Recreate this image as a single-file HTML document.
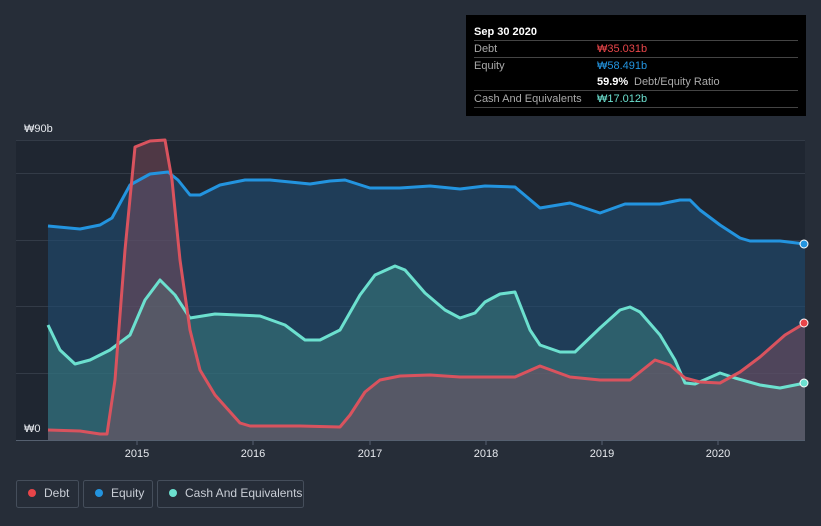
<!DOCTYPE html>
<html><head><style>
body{margin:0;background:#262d38;font-family:"Liberation Sans",sans-serif;}
svg{display:block}
</style></head><body>
<svg width="821" height="526" xmlns="http://www.w3.org/2000/svg" font-family="Liberation Sans, sans-serif">
<rect width="821" height="526" fill="#262d38"/>
<rect x="16" y="140" width="789" height="300" fill="#1f2631"/>
<g stroke="#333b47" stroke-width="1">
<line x1="16" y1="140.5" x2="805" y2="140.5"/><line x1="16" y1="173.5" x2="805" y2="173.5"/>
<line x1="16" y1="240.5" x2="805" y2="240.5"/><line x1="16" y1="306.5" x2="805" y2="306.5"/>
<line x1="16" y1="373.5" x2="805" y2="373.5"/>
</g>
<path d="M48,226 L80,229 L100,225 L112,218 L130,185 L150,174 L168,172 L178,180 L190,195 L200,195 L220,185 L245,180 L270,180 L290,182 L310,184 L330,181 L345,180 L370,188 L400,188 L430,186 L460,189 L485,186 L515,187 L540,208 L570,203 L600,213 L625,204 L660,204 L680,200 L690,200 L700,210 L720,225 L740,238 L750,241 L780,241 L805,244 L805,440 L48,440Z" fill="#1f4d73" fill-opacity="0.6"/>
<path d="M48,325 L60,350 L75,364 L90,360 L110,350 L130,335 L145,300 L160,280 L175,295 L190,318 L215,314 L260,316 L285,325 L305,340 L320,340 L340,330 L360,295 L375,275 L395,266 L405,270 L425,293 L445,310 L460,318 L475,313 L485,302 L500,294 L515,292 L530,330 L540,345 L560,352 L575,352 L600,328 L620,310 L630,307 L640,312 L660,335 L675,360 L685,383 L695,384 L720,373 L735,378 L760,385 L780,388 L805,383 L805,440 L48,440Z" fill="#3f8a86" fill-opacity="0.45"/>
<path d="M48,430 L80,431 L100,434 L107,434 L115,380 L125,250 L135,147 L150,141 L165,140 L172,180 L180,260 L190,330 L200,370 L215,395 L240,423 L250,426 L300,426 L340,427 L350,415 L365,392 L380,380 L400,376 L430,375 L460,377 L515,377 L540,366 L570,377 L600,380 L630,380 L655,360 L670,365 L685,378 L700,382 L720,383 L740,372 L760,357 L785,335 L805,323 L805,440 L48,440Z" fill="#8a5060" fill-opacity="0.45"/>
<g fill="none" stroke-width="3" stroke-linejoin="round">
<path d="M48,226 L80,229 L100,225 L112,218 L130,185 L150,174 L168,172 L178,180 L190,195 L200,195 L220,185 L245,180 L270,180 L290,182 L310,184 L330,181 L345,180 L370,188 L400,188 L430,186 L460,189 L485,186 L515,187 L540,208 L570,203 L600,213 L625,204 L660,204 L680,200 L690,200 L700,210 L720,225 L740,238 L750,241 L780,241 L805,244" stroke="#2394df"/>
<path d="M48,325 L60,350 L75,364 L90,360 L110,350 L130,335 L145,300 L160,280 L175,295 L190,318 L215,314 L260,316 L285,325 L305,340 L320,340 L340,330 L360,295 L375,275 L395,266 L405,270 L425,293 L445,310 L460,318 L475,313 L485,302 L500,294 L515,292 L530,330 L540,345 L560,352 L575,352 L600,328 L620,310 L630,307 L640,312 L660,335 L675,360 L685,383 L695,384 L720,373 L735,378 L760,385 L780,388 L805,383" stroke="#6ce0cf"/>
<path d="M48,430 L80,431 L100,434 L107,434 L115,380 L125,250 L135,147 L150,141 L165,140 L172,180 L180,260 L190,330 L200,370 L215,395 L240,423 L250,426 L300,426 L340,427 L350,415 L365,392 L380,380 L400,376 L430,375 L460,377 L515,377 L540,366 L570,377 L600,380 L630,380 L655,360 L670,365 L685,378 L700,382 L720,383 L740,372 L760,357 L785,335 L805,323" stroke="#d9535e"/>
</g>
<circle cx="804" cy="244" r="4" fill="#2394df" stroke="#fff" stroke-width="1"/>
<circle cx="804" cy="323" r="4" fill="#e84549" stroke="#fff" stroke-width="1"/>
<circle cx="804" cy="383" r="4" fill="#6ce0cf" stroke="#fff" stroke-width="1"/>
<line x1="16" y1="440.5" x2="805" y2="440.5" stroke="#556070"/>
<g stroke="#556070"><line x1="137" y1="440" x2="137" y2="445"/><line x1="253" y1="440" x2="253" y2="445"/><line x1="370" y1="440" x2="370" y2="445"/><line x1="486" y1="440" x2="486" y2="445"/><line x1="602" y1="440" x2="602" y2="445"/><line x1="718" y1="440" x2="718" y2="445"/></g>
<g fill="#e6e9ee" font-size="11" text-anchor="middle"><text x="137" y="457">2015</text><text x="253" y="457">2016</text><text x="370" y="457">2017</text><text x="486" y="457">2018</text><text x="602" y="457">2019</text><text x="718" y="457">2020</text></g>
<text x="24" y="132" fill="#e6e9ee" font-size="11">₩90b</text>
<text x="24" y="432" fill="#e6e9ee" font-size="11">₩0</text>
<g font-size="12" fill="#c9ced6">
<rect x="16.5" y="480.5" width="62" height="27" rx="2" fill="none" stroke="#454e5b"/>
<circle cx="32" cy="493" r="4" fill="#e84549"/><text x="44" y="497">Debt</text>
<rect x="83.5" y="480.5" width="69" height="27" rx="2" fill="none" stroke="#454e5b"/>
<circle cx="99" cy="493" r="4" fill="#2394df"/><text x="111" y="497">Equity</text>
<rect x="157.5" y="480.5" width="146" height="27" rx="2" fill="none" stroke="#454e5b"/>
<circle cx="173" cy="493" r="4" fill="#6ce0cf"/><text x="185" y="497">Cash And Equivalents</text>
</g>
<rect x="466" y="15" width="340" height="101" fill="#000"/>
<g font-size="11">
<text x="474" y="35" fill="#fff" font-weight="bold">Sep 30 2020</text>
<line x1="474" y1="40.5" x2="798" y2="40.5" stroke="#444"/>
<text x="474" y="52" fill="#aaa">Debt</text><text x="597" y="52" fill="#e84549">₩35.031b</text>
<line x1="474" y1="57.5" x2="798" y2="57.5" stroke="#444"/>
<text x="474" y="69" fill="#aaa">Equity</text><text x="597" y="69" fill="#2394df">₩58.491b</text>
<text x="597" y="85" fill="#fff" font-weight="bold">59.9%</text><text x="634" y="85" fill="#aaa">Debt/Equity Ratio</text>
<line x1="474" y1="90.5" x2="798" y2="90.5" stroke="#444"/>
<text x="474" y="102" fill="#aaa">Cash And Equivalents</text><text x="597" y="102" fill="#6ce0cf">₩17.012b</text>
<line x1="474" y1="107.5" x2="798" y2="107.5" stroke="#444"/>
</g>
</svg>
</body></html>
